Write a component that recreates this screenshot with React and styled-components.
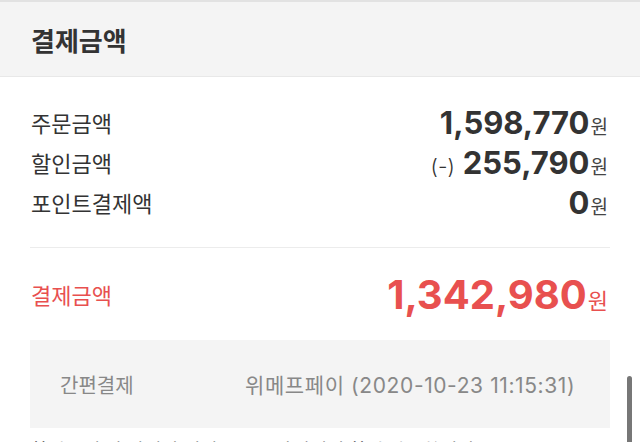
import React from 'react';
import styled, { createGlobalStyle } from 'styled-components';

const GlobalStyle = createGlobalStyle`
  html, body {
    margin: 0;
    padding: 0;
    background: #fff;
    overflow: hidden;
  }
  body {
    font-family: 'Noto Sans CJK KR', 'Noto Sans', sans-serif;
    color: #333;
  }
`;

const Page = styled.div`
  position: relative;
  width: 640px;
  height: 442px;
  overflow: hidden;
  border-top: 2px solid #e2e2e2;
  box-sizing: border-box;
`;

const Header = styled.header`
  display: flex;
  align-items: center;
  height: 74px;
  padding: 0 31px;
  background: #f4f4f4;
  border-bottom: 1px solid #e8e8e8;
`;

const Title = styled.h2`
  margin: 0;
  font-size: 26px;
  font-weight: 700;
  color: #333;
`;

const Body = styled.section`
  padding: 0 30px;
`;

const List = styled.div`
  display: flex;
  flex-direction: column;
  padding: 25px 0 25px;
  border-bottom: 1px solid #ececec;
`;

const Row = styled.div`
  display: flex;
  align-items: center;
  justify-content: space-between;
  height: ${p => p.$h || 40}px;
  padding-left: 1px;
`;

const Label = styled.span`
  font-size: 22px;
  color: ${p => (p.$red ? '#e8504f' : '#333')};
`;

const Value = styled.span`
  display: flex;
  align-items: baseline;
  margin-right: 2px;
  color: ${p => (p.$red ? '#e8504f' : '#333')};
`;

const Minus = styled.span`
  font-family: Inter, sans-serif;
  font-size: 21px;
  font-weight: 300;
  margin-right: 8px;
`;

const Num = styled.span`
  font-family: Inter, 'Liberation Sans', sans-serif;
  font-size: ${p => (p.$big ? 40 : 31)}px;
  font-weight: 700;
`;

const Won = styled.span`
  font-size: ${p => (p.$big ? 22 : 19)}px;
  margin-left: 1px;
  color: ${p => (p.$big ? '#e8504f' : '#444')};
`;

const Total = styled.div`
  padding: 18px 0 18px;
`;

const PayBox = styled.div`
  display: flex;
  align-items: center;
  height: 88px;
  padding: 0 30px;
  background: #f4f4f4;
  color: #888;
  font-size: 20px;
`;

const PayType = styled.span`
  width: 185px;
`;

const PayInfo = styled.span`
  font-family: Inter, 'Noto Sans CJK KR', sans-serif;
  font-size: 21px;
  letter-spacing: 0.6px;
`;

const Note = styled.p`
  margin: 8px 0 0;
  font-size: 19px;
  color: #444;
  white-space: nowrap;
`;

const Scroll = styled.div`
  position: absolute;
  right: 8px;
  top: 374px;
  width: 5px;
  height: 80px;
  border-radius: 3px;
  background: #777;
`;

const rows = [
  { label: '주문금액', value: '1,598,770' },
  { label: '할인금액', value: '255,790', minus: true },
  { label: '포인트결제액', value: '0' },
];

export default function App() {
  return (
    <Page>
      <GlobalStyle />
      <Header>
        <Title>결제금액</Title>
      </Header>
      <Body>
        <List>
          {rows.map(r => (
            <Row key={r.label}>
              <Label>{r.label}</Label>
              <Value>
                {r.minus && <Minus>(-)</Minus>}
                <Num>{r.value}</Num>
                <Won>원</Won>
              </Value>
            </Row>
          ))}
        </List>
        <Total>
          <Row $h={56}>
            <Label $red>결제금액</Label>
            <Value $red>
              <Num $big>1,342,980</Num>
              <Won $big>원</Won>
            </Value>
          </Row>
        </Total>
        <PayBox>
          <PayType>간편결제</PayType>
          <PayInfo>위메프페이 (2020-10-23 11:15:31)</PayInfo>
        </PayBox>
        <Note>할인금액 및 결제된 내역은 주문상세에서 확인 가능합니다.</Note>
      </Body>
      <Scroll />
    </Page>
  );
}
